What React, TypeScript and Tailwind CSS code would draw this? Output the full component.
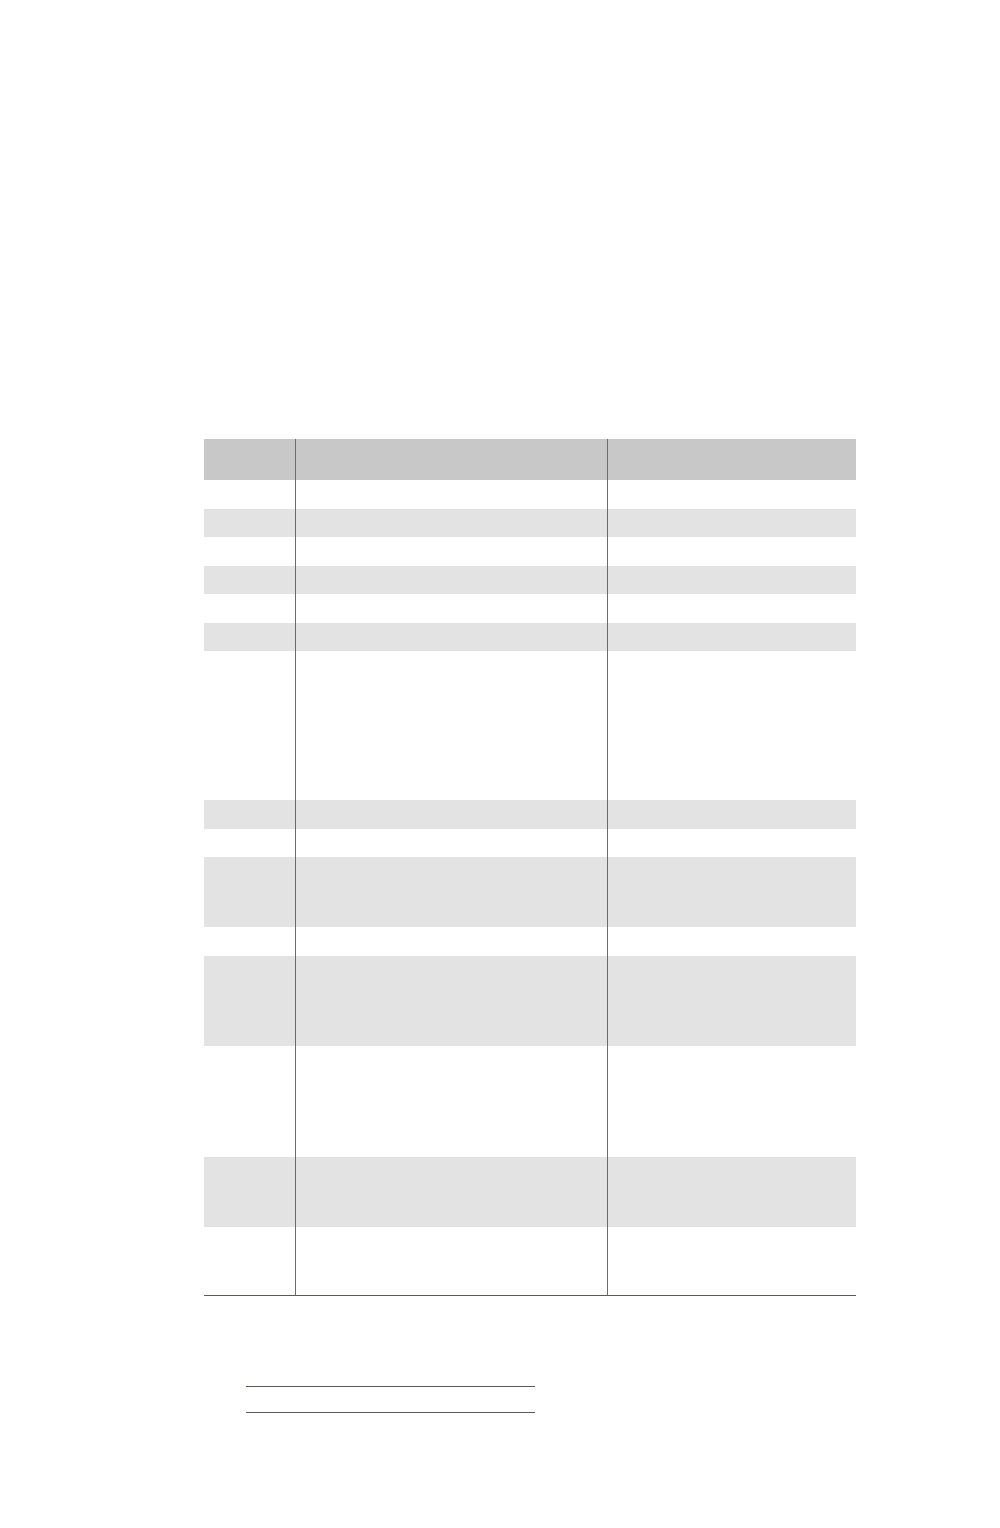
import React from 'react';

type Row = { h: string; shade: 'head' | 'gray' | 'white' };

const rows: Row[] = [
  { h: 'h-[41px]', shade: 'head' },
  { h: 'h-[28.5px]', shade: 'white' },
  { h: 'h-[28.5px]', shade: 'gray' },
  { h: 'h-[28.5px]', shade: 'white' },
  { h: 'h-[28.5px]', shade: 'gray' },
  { h: 'h-[28.5px]', shade: 'white' },
  { h: 'h-[28.5px]', shade: 'gray' },
  { h: 'h-[149px]', shade: 'white' },
  { h: 'h-[28.5px]', shade: 'gray' },
  { h: 'h-[28.5px]', shade: 'white' },
  { h: 'h-[70px]', shade: 'gray' },
  { h: 'h-[28.5px]', shade: 'white' },
  { h: 'h-[90px]', shade: 'gray' },
  { h: 'h-[111.5px]', shade: 'white' },
  { h: 'h-[69.5px]', shade: 'gray' },
  { h: 'h-[68px]', shade: 'white' },
];

const bgFor = (shade: Row['shade']) =>
  shade === 'head' ? 'bg-[#c8c8c8]' : shade === 'gray' ? 'bg-[#e3e3e3]' : 'bg-white';

const App = () => {
  return (
    <div className="min-h-[1528px] w-[1000px] bg-white pt-[439px]">
      {/* empty table */}
      <div className="ml-[204px] flex w-[652px] flex-col border-b-[1.5px] border-[#5e5a55]">
        {rows.map((r, i) => (
          <div key={i} className={`flex ${r.h} ${bgFor(r.shade)}`}>
            <div className="w-[92px] border-r border-[#6e6a64]" />
            <div className="w-[312px] border-r border-[#6e6a64]" />
            <div className="flex-1" />
          </div>
        ))}
      </div>

      {/* signature lines */}
      <div className="ml-[246px] mt-[90px] flex w-[289px] flex-col gap-[24.5px]">
        <div className="h-[1.5px] bg-[#5e5a50]" />
        <div className="h-[1.5px] bg-[#5e5a50]" />
      </div>
    </div>
  );
};

export default App;
